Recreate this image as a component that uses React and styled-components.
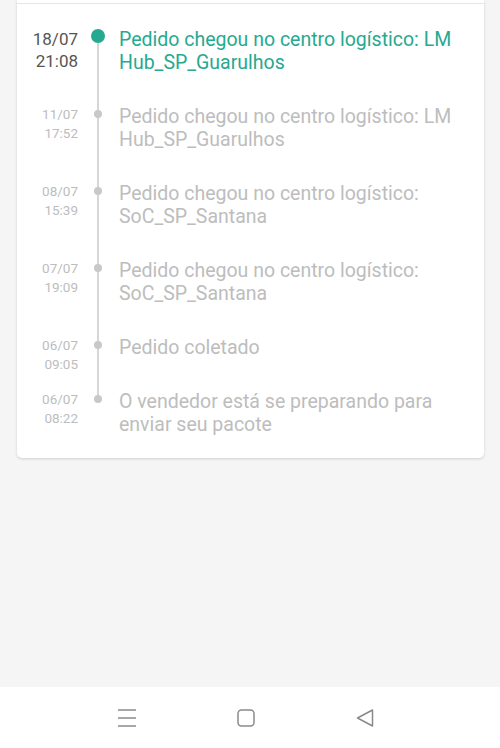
import React from 'react'
import styled, { createGlobalStyle } from 'styled-components'

const GlobalStyle = createGlobalStyle`
  html, body {
    margin: 0;
    padding: 0;
    background: #f5f5f5;
    font-family: Roboto, "Noto Sans", "Liberation Sans", sans-serif;
  }
`

const Screen = styled.div`
  width: 500px;
  height: 748px;
  display: flex;
  flex-direction: column;
  background: #f5f5f5;
  overflow: hidden;
`

const Content = styled.div`
  flex: 1;
  padding: 0 16px 0 17px;
`

const Card = styled.div`
  background: #fff;
  border-radius: 0 0 5px 5px;
  box-shadow: 0 1px 3px rgba(0, 0, 0, 0.16);
`

const TopStrip = styled.div`
  height: 3px;
  border-bottom: 1px solid #e6e6e6;
`

const Timeline = styled.div`
  padding: 24px 14px 0 0;
  display: flex;
  flex-direction: column;
`

const Row = styled.div`
  display: grid;
  grid-template-columns: 61px 40px 1fr;
`

const DateCol = styled.div`
  text-align: right;
  font-size: ${(p) => (p.active ? '17px' : '13.5px')};
  line-height: ${(p) => (p.active ? '22px' : '19px')};
  color: ${(p) => (p.active ? '#555' : '#bdbdbd')};
`

const Rail = styled.div`
  position: relative;
  display: flex;
  justify-content: center;
  align-items: flex-start;
`

const Line = styled.div`
  position: absolute;
  left: 19px;
  width: 2px;
  top: ${(p) => (p.first ? '10px' : '0')};
  bottom: -10px;
  background: #d6d6d6;
`

const Dot = styled.div`
  position: relative;
  margin-top: ${(p) => (p.active ? '1px' : '5px')};
  width: ${(p) => (p.active ? '14px' : '8px')};
  height: ${(p) => (p.active ? '14px' : '8px')};
  border-radius: 50%;
  background: ${(p) => (p.active ? '#26a991' : '#c8c8c8')};
`

const Text = styled.div`
  font-size: 19.5px;
  line-height: 23px;
  color: ${(p) => (p.active ? '#26a991' : '#bdbdbd')};
  padding-left: 1px;
  padding-bottom: ${(p) => (p.last ? '22px' : '31px')};
`

const NavBar = styled.div`
  height: 61px;
  background: #fff;
  display: flex;
  align-items: center;
  justify-content: center;
  gap: 101px;
  padding-right: 9px;
`

const NavButton = styled.div`
  width: 18px;
  height: 18px;
  display: flex;
  align-items: center;
  justify-content: center;
`

const events = [
  { date: '18/07', time: '21:08', text: 'Pedido chegou no centro logístico: LM Hub_SP_Guarulhos' },
  { date: '11/07', time: '17:52', text: 'Pedido chegou no centro logístico: LM Hub_SP_Guarulhos' },
  { date: '08/07', time: '15:39', text: 'Pedido chegou no centro logístico: SoC_SP_Santana' },
  { date: '07/07', time: '19:09', text: 'Pedido chegou no centro logístico: SoC_SP_Santana' },
  { date: '06/07', time: '09:05', text: 'Pedido coletado' },
  { date: '06/07', time: '08:22', text: 'O vendedor está se preparando para enviar seu pacote' },
]

const App = () => {
  return (
    <Screen>
      <GlobalStyle />
      <Content>
        <Card>
          <TopStrip />
          <Timeline>
            {events.map((ev, i) => {
              const active = i === 0
              const last = i === events.length - 1
              return (
                <Row key={i}>
                  <DateCol active={active}>
                    {ev.date}
                    <br />
                    {ev.time}
                  </DateCol>
                  <Rail>
                    {!last && <Line first={active} />}
                    <Dot active={active} />
                  </Rail>
                  <Text active={active} last={last}>{ev.text}</Text>
                </Row>
              )
            })}
          </Timeline>
        </Card>
      </Content>
      <NavBar>
        <NavButton>
          <svg width="18" height="18" viewBox="0 0 18 18">
            <g stroke="#8a8a8a" strokeWidth="1.5">
              <line x1="0" y1="1" x2="18" y2="1" />
              <line x1="0" y1="9" x2="18" y2="9" />
              <line x1="0" y1="17" x2="18" y2="17" />
            </g>
          </svg>
        </NavButton>
        <NavButton>
          <svg width="18" height="18" viewBox="0 0 18 18">
            <rect x="1" y="1" width="16" height="16" rx="3.5" fill="none" stroke="#8a8a8a" strokeWidth="1.5" />
          </svg>
        </NavButton>
        <NavButton>
          <svg width="18" height="18" viewBox="0 0 18 18">
            <path d="M16.5 1 L16.5 17 L1.5 9 Z" fill="none" stroke="#8a8a8a" strokeWidth="1.5" strokeLinejoin="round" />
          </svg>
        </NavButton>
      </NavBar>
    </Screen>
  )
}

export default App
